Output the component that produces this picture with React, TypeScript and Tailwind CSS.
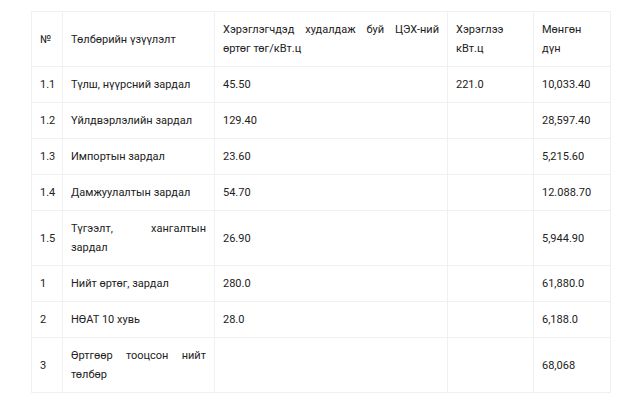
const rows: { no: string; name: string; cost: string; qty: string; sum: string }[] = [
  { no: '1.1', name: 'Түлш, нүүрсний зардал', cost: '45.50', qty: '221.0', sum: '10,033.40' },
  { no: '1.2', name: 'Үйлдвэрлэлийн зардал', cost: '129.40', qty: '', sum: '28,597.40' },
  { no: '1.3', name: 'Импортын зардал', cost: '23.60', qty: '', sum: '5,215.60' },
  { no: '1.4', name: 'Дамжуулалтын зардал', cost: '54.70', qty: '', sum: '12.088.70' },
  { no: '1.5', name: 'Түгээлт, хангалтын зардал', cost: '26.90', qty: '', sum: '5,944.90' },
  { no: '1', name: 'Нийт өртөг, зардал', cost: '280.0', qty: '', sum: '61,880.0' },
  { no: '2', name: 'НӨАТ 10 хувь', cost: '28.0', qty: '', sum: '6,188.0' },
  { no: '3', name: 'Өртгөөр тооцсон нийт төлбөр', cost: '', qty: '', sum: '68,068' },
];

const cell = 'border border-[#f0f0f0] px-2 py-2 align-middle text-justify';

export default function App() {
  return (
    <div className="min-h-screen bg-white pt-[11px] pl-[31px]" style={{ fontFamily: 'Roboto, "Liberation Sans", sans-serif' }}>
      <table className="table-fixed border-collapse w-[579px] text-[11px] leading-[19px] text-[#222]">
        <colgroup>
          <col className="w-[31px]" />
          <col className="w-[152px]" />
          <col className="w-[233px]" />
          <col className="w-[86px]" />
          <col className="w-[77px]" />
        </colgroup>
        <thead>
          <tr>
            <th className={`${cell} font-normal text-left`}>№</th>
            <th className={`${cell} font-normal text-left`}>Төлбөрийн үзүүлэлт</th>
            <th className={`${cell} font-normal`}>Хэрэглэгчдэд худалдаж буй ЦЭХ-ний өртөг төг/кВт.ц</th>
            <th className={`${cell} font-normal text-left`}>Хэрэглээ кВт.ц</th>
            <th className={`${cell} font-normal text-left`}>Мөнгөн дүн</th>
          </tr>
        </thead>
        <tbody>
          {rows.map((r) => (
            <tr key={r.no}>
              <td className={cell}>{r.no}</td>
              <td className={cell}>{r.name}</td>
              <td className={cell}>{r.cost}</td>
              <td className={cell}>{r.qty}</td>
              <td className={cell}>{r.sum}</td>
            </tr>
          ))}
        </tbody>
      </table>
    </div>
  );
}
